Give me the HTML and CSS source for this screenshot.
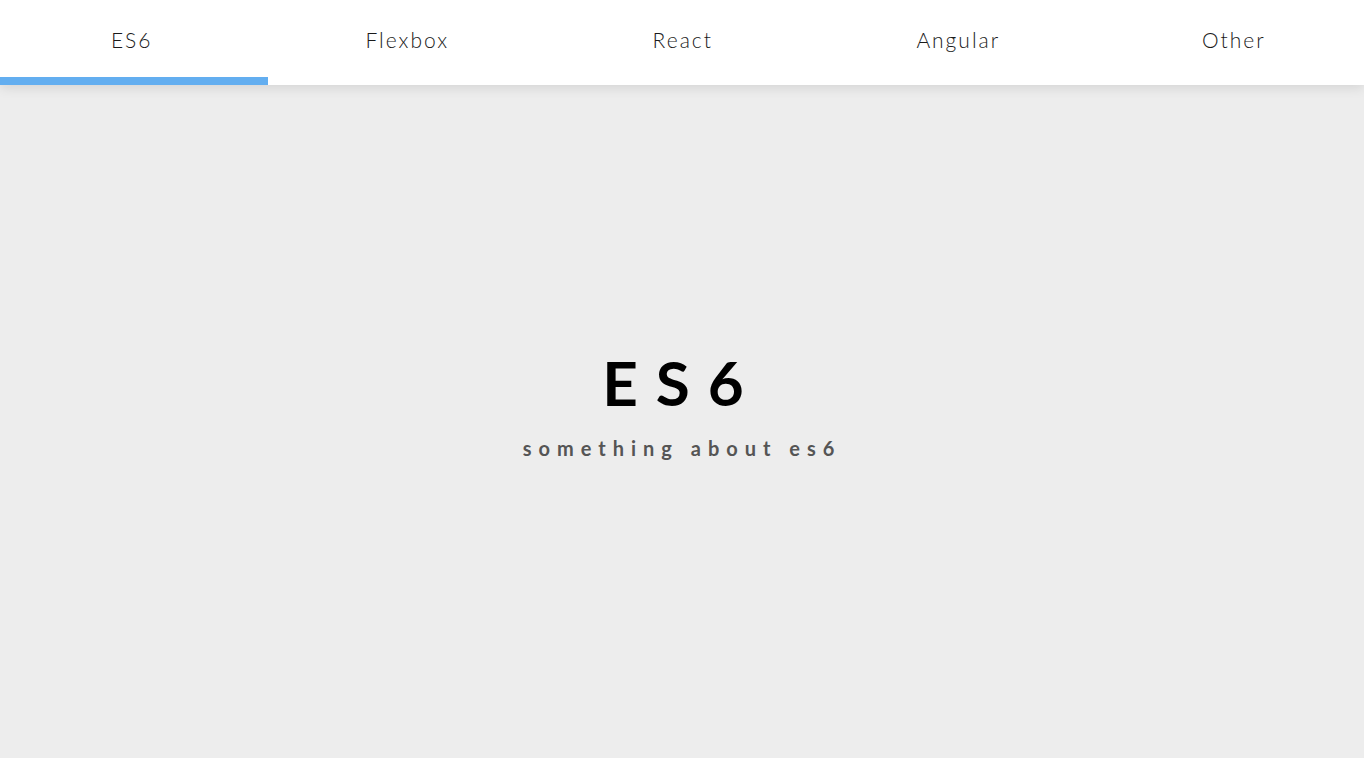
FILE: index.html
```html
<!DOCTYPE html>
<html>
<head>
<meta charset="utf-8">
<link rel="stylesheet" href="styles.css">
</head>
<body>
<nav class="nav">
  <div class="tabs">
    <a class="tab">ES6</a>
    <a class="tab">Flexbox</a>
    <a class="tab">React</a>
    <a class="tab">Angular</a>
    <a class="tab">Other</a>
  </div>
  <span class="indicator"></span>
</nav>
<main class="content">
  <h1 class="title">ES6</h1>
  <p class="subtitle">something about es6</p>
</main>
</body>
</html>
```
FILE: styles.css
```css
* { box-sizing: border-box; }
html, body { margin: 0; height: 100%; }
body {
  background: #ededed;
  font-family: "Lato", "DejaVu Sans", sans-serif;
  display: flex;
  flex-direction: column;
  overflow: hidden;
}
.nav {
  position: relative;
  height: 85px;
  background: #fff;
  box-shadow: 0 2px 12px rgba(0,0,0,0.12);
  z-index: 2;
  overflow: hidden;
}
.tabs {
  display: flex;
  height: 100%;
  margin-left: -6px;
}
.tab {
  flex: 0 0 275.5px;
  text-align: center;
  padding-top: 27px;
  font-size: 21px;
  font-weight: 300;
  letter-spacing: 2px;
  color: #1a1a1a;
}
.indicator {
  position: absolute;
  left: 0;
  bottom: 0;
  width: 268px;
  height: 8px;
  background: #63aef0;
}
.content {
  flex: 1;
  display: flex;
  flex-direction: column;
  align-items: center;
  justify-content: center;
  padding-bottom: 34px;
}
.title {
  margin: 0;
  font-size: 62px;
  font-weight: 700;
  letter-spacing: 18px;
  color: #000;
  line-height: 1;
}
.subtitle {
  margin: 25px 0 0;
  font-size: 20px;
  font-weight: 700;
  letter-spacing: 7px;
  color: #555;
  line-height: 1;
}
```
